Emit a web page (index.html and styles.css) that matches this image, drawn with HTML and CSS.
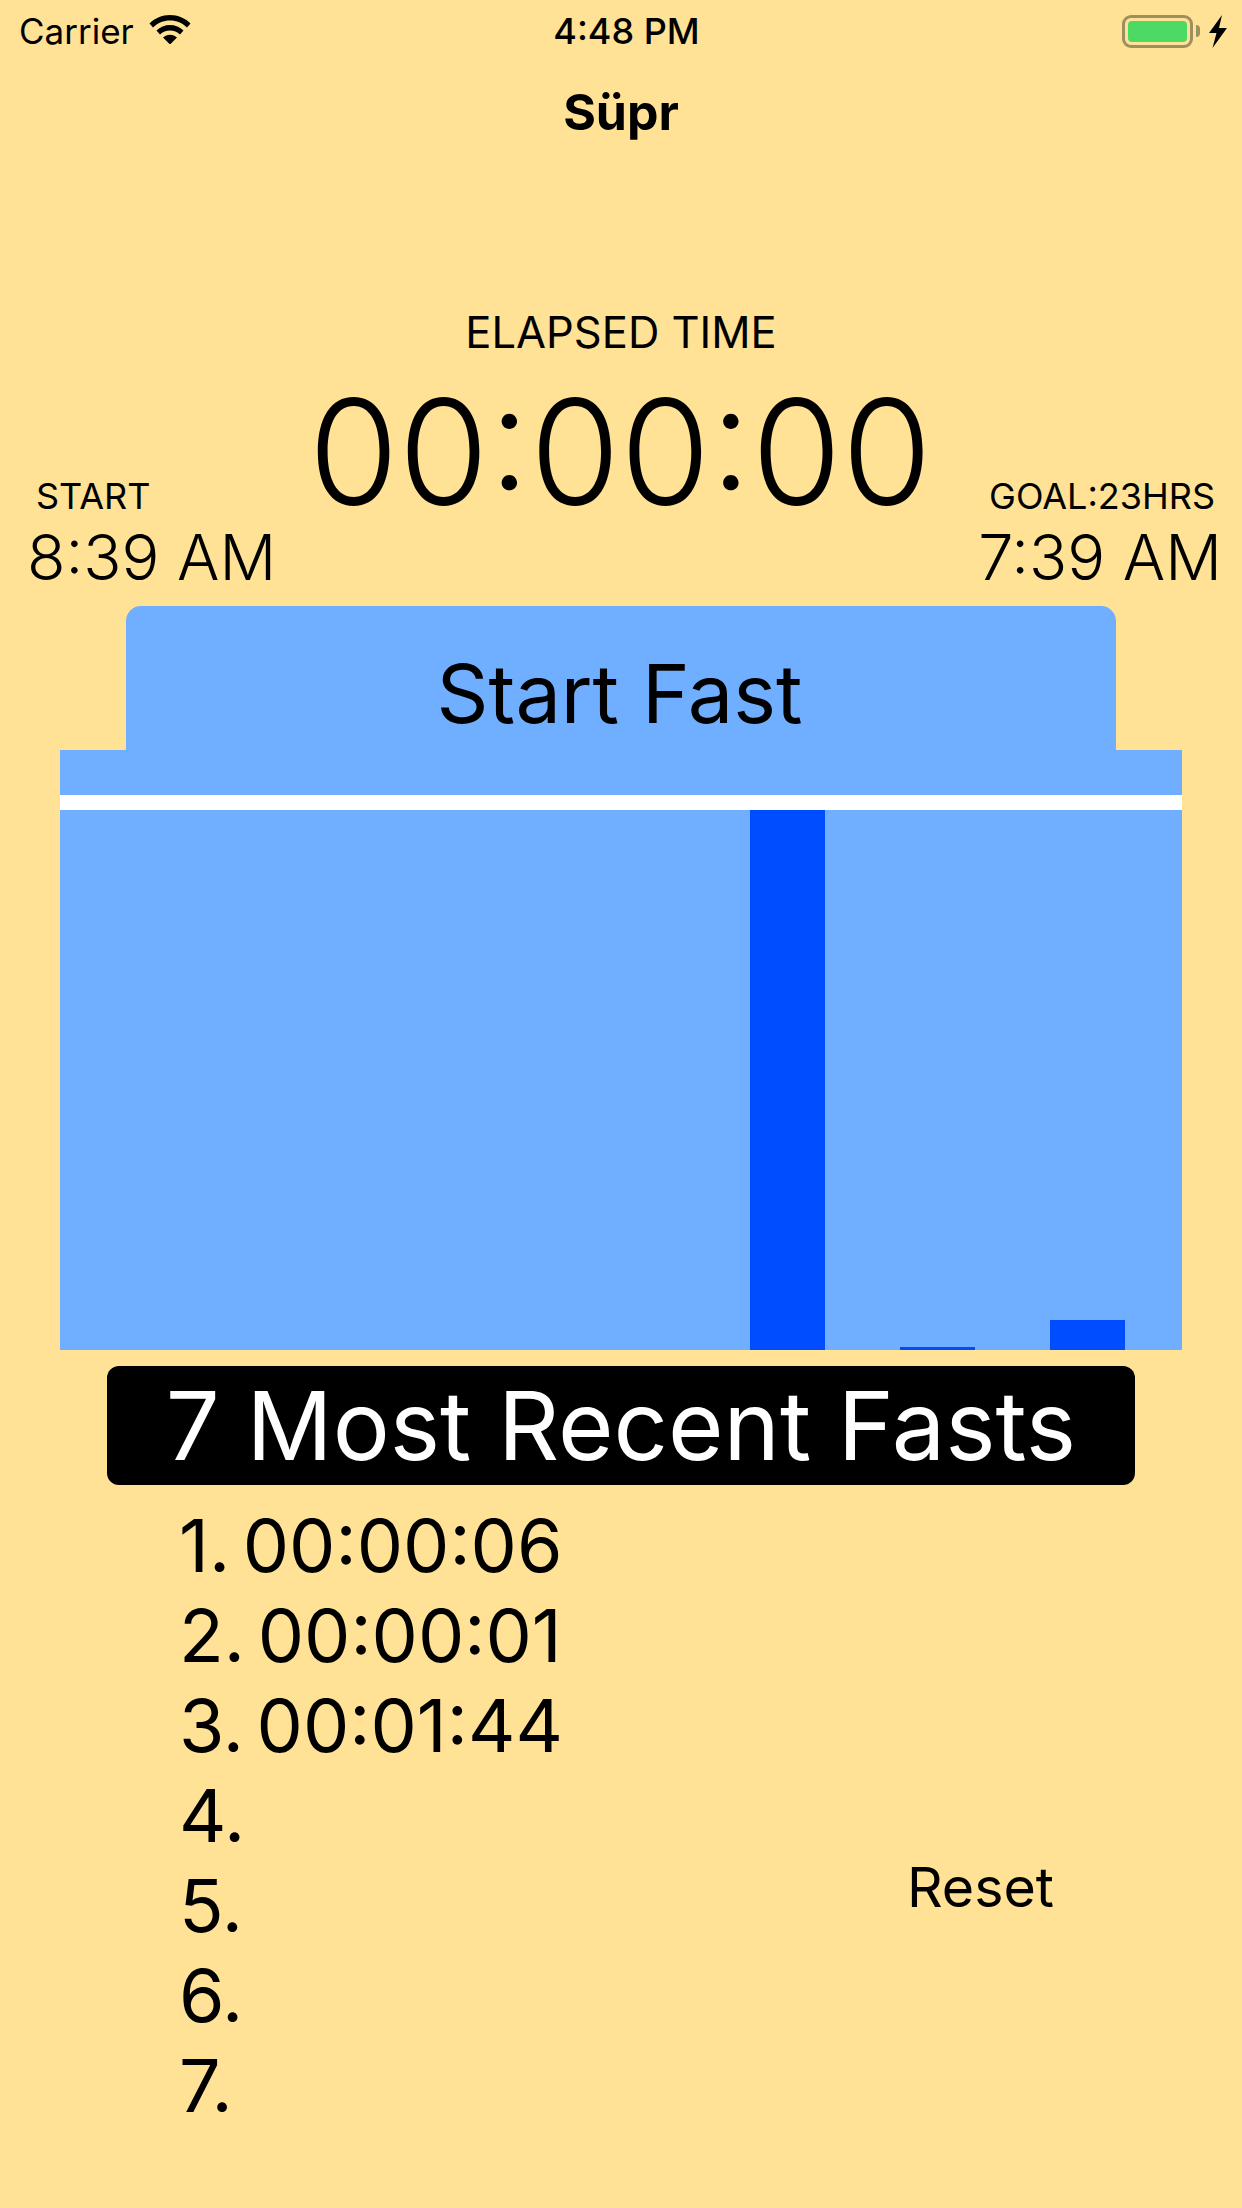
FILE: index.html
```html
<!DOCTYPE html>
<html lang="en">
<head>
  <meta charset="UTF-8">
  <title>Süpr</title>
  <meta name="viewport" content="width=device-width, initial-scale=1">
  <link rel="stylesheet" href="styles.css">
</head>
<body>
  <div class="status-bar">
    <div class="status-left">
      <span class="carrier">Carrier</span>
      <svg class="wifi" width="42" height="30" viewBox="0 0 42 30">
        <path d="M0.5 9.5C6 4 13 1 21 1s15 3 20.500 8.500l-3.500 4C33.500 9 27.500 6.500 21 6.500S8.500 9 4 13.500z"/>
        <path d="M7.500 16.500C11 13 15.800 11 21 11s10 2 13.500 5.500l-3.500 4C28.300 17.800 24.800 16.400 21 16.400s-7.300 1.400-10 4.100z"/>
        <path d="M14 23.500c1.800-1.700 4.300-2.800 7-2.800s5.200 1.100 7 2.800l-7 7z"/>
      </svg>
    </div>
    <span class="clock">4:48 PM</span>
    <div class="status-right">
      <div class="battery"><div class="battery-fill"></div></div>
      <div class="battery-cap"></div>
      <svg class="bolt" width="18" height="33" viewBox="0 0 18 33">
        <path d="M13 0 L0 18 H7.500 L3.500 33 L18 13 H10 Z"/>
      </svg>
    </div>
  </div>
  <div class="nav-title">Süpr</div>

  <div class="elapsed-label">ELAPSED TIME</div>
  <div class="times">
    <div class="time-col">
      <div class="time-label">START</div>
      <div class="time-value">8:39 AM</div>
    </div>
    <div class="timer">00:00:00</div>
    <div class="time-col time-col-right">
      <div class="time-label">GOAL:23HRS</div>
      <div class="time-value">7:39 AM</div>
    </div>
  </div>

  <button class="start-btn">Start Fast</button>
  <div class="chart">
    <div class="goal-line"></div>
    <div class="bars">
      <div class="bar"></div>
      <div class="bar"></div>
      <div class="bar"></div>
      <div class="bar"></div>
      <div class="bar" style="height: 540px"></div>
      <div class="bar" style="height: 3px"></div>
      <div class="bar" style="height: 30px"></div>
    </div>
  </div>

  <div class="recent-title">7 Most Recent Fasts</div>
  <div class="recent">
    <ol class="fast-list">
      <li>1. 00:00:06</li>
      <li>2. 00:00:01</li>
      <li>3. 00:01:44</li>
      <li>4.</li>
      <li>5.</li>
      <li>6.</li>
      <li>7.</li>
    </ol>
    <button class="reset-btn">Reset</button>
  </div>
</body>
</html>
```

FILE: styles.css
```css
* {
  box-sizing: border-box;
  font-family: 'Inter', 'Liberation Sans', sans-serif;
}
body {
  margin: 0;
  width: 1242px;
  height: 2208px;
  overflow: hidden;
  background: #ffe296;
  color: #000;
}
.status-bar {
  height: 62px;
  padding: 0 15px 0 19px;
  display: flex;
  align-items: center;
  justify-content: space-between;
  position: relative;
}
.status-left, .status-right {
  display: flex;
  align-items: center;
}
.carrier {
  font-size: 35px;
}
.wifi {
  margin-left: 15px;
  margin-top: -4px;
}
.clock {
  position: absolute;
  left: 11px;
  right: 0;
  text-align: center;
  font-size: 36px;
  font-weight: 500;
}
.battery {
  width: 71px;
  height: 33px;
  border: 3px solid #a08f5e;
  border-radius: 9px;
  padding: 3px;
}
.battery-fill {
  height: 100%;
  background: #4cd964;
  border-radius: 4px;
}
.battery-cap {
  width: 4px;
  height: 12px;
  margin-left: 3px;
  background: #a08f5e;
  border-radius: 0 6px 6px 0;
}
.bolt {
  margin-left: 9px;
}
.nav-title {
  height: 66px;
  margin-top: 17px;
  display: flex;
  align-items: center;
  justify-content: center;
  font-size: 50px;
  font-weight: 700;
}
.elapsed-label {
  margin-top: 162px;
  height: 50px;
  line-height: 50px;
  text-align: center;
  font-size: 43.500px;
}
.times {
  display: flex;
  justify-content: space-between;
  align-items: flex-end;
  padding: 0 20px 13px 27px;
  height: 249px;
}
.time-label {
  font-size: 36px;
  line-height: 40px;
  margin-bottom: 5px;
  padding-left: 9px;
}
.time-value {
  font-size: 63px;
  font-weight: 300;
  line-height: 72px;
}
.time-col-right {
  text-align: right;
}
.time-col-right .time-label {
  padding: 0 7px 0 0;
}
.timer {
  font-size: 146px;
  font-weight: 300;
  line-height: 170px;
  margin: 0 0 56px -14px;
}
.start-btn {
  display: block;
  width: 990px;
  height: 144px;
  margin: 0 auto;
  padding: 31px 3px 0 0;
  border: none;
  border-radius: 15px 15px 0 0;
  background: #70afff;
  font-size: 81px;
  font-weight: 400;
  color: #000;
}
.chart {
  margin: 0 60px;
  height: 600px;
  padding-top: 45px;
  background: #70afff;
}
.goal-line {
  height: 15px;
  background: #fff;
}
.bars {
  height: 540px;
  display: flex;
  align-items: flex-end;
  justify-content: flex-end;
  gap: 75px;
  padding-right: 57px;
}
.bar {
  width: 75px;
  background: #004cff;
}
.recent-title {
  width: 1028px;
  height: 119px;
  margin: 16px 0 0 107px;
  background: #000;
  border-radius: 12px;
  color: #fff;
  font-size: 95.300px;
  line-height: 119px;
  text-align: center;
}
.recent {
  display: flex;
  justify-content: space-between;
  align-items: center;
  padding: 16px 188px 0 179px;
}
.fast-list {
  list-style: none;
  margin: 0;
  padding: 0;
}
.fast-list li {
  height: 90px;
  line-height: 90px;
  font-size: 73.500px;
  font-weight: 400;
  word-spacing: -8px;
}
.reset-btn {
  border: none;
  background: none;
  padding: 0;
  margin-top: 140px;
  font-size: 55.500px;
  color: #000;
}
```
